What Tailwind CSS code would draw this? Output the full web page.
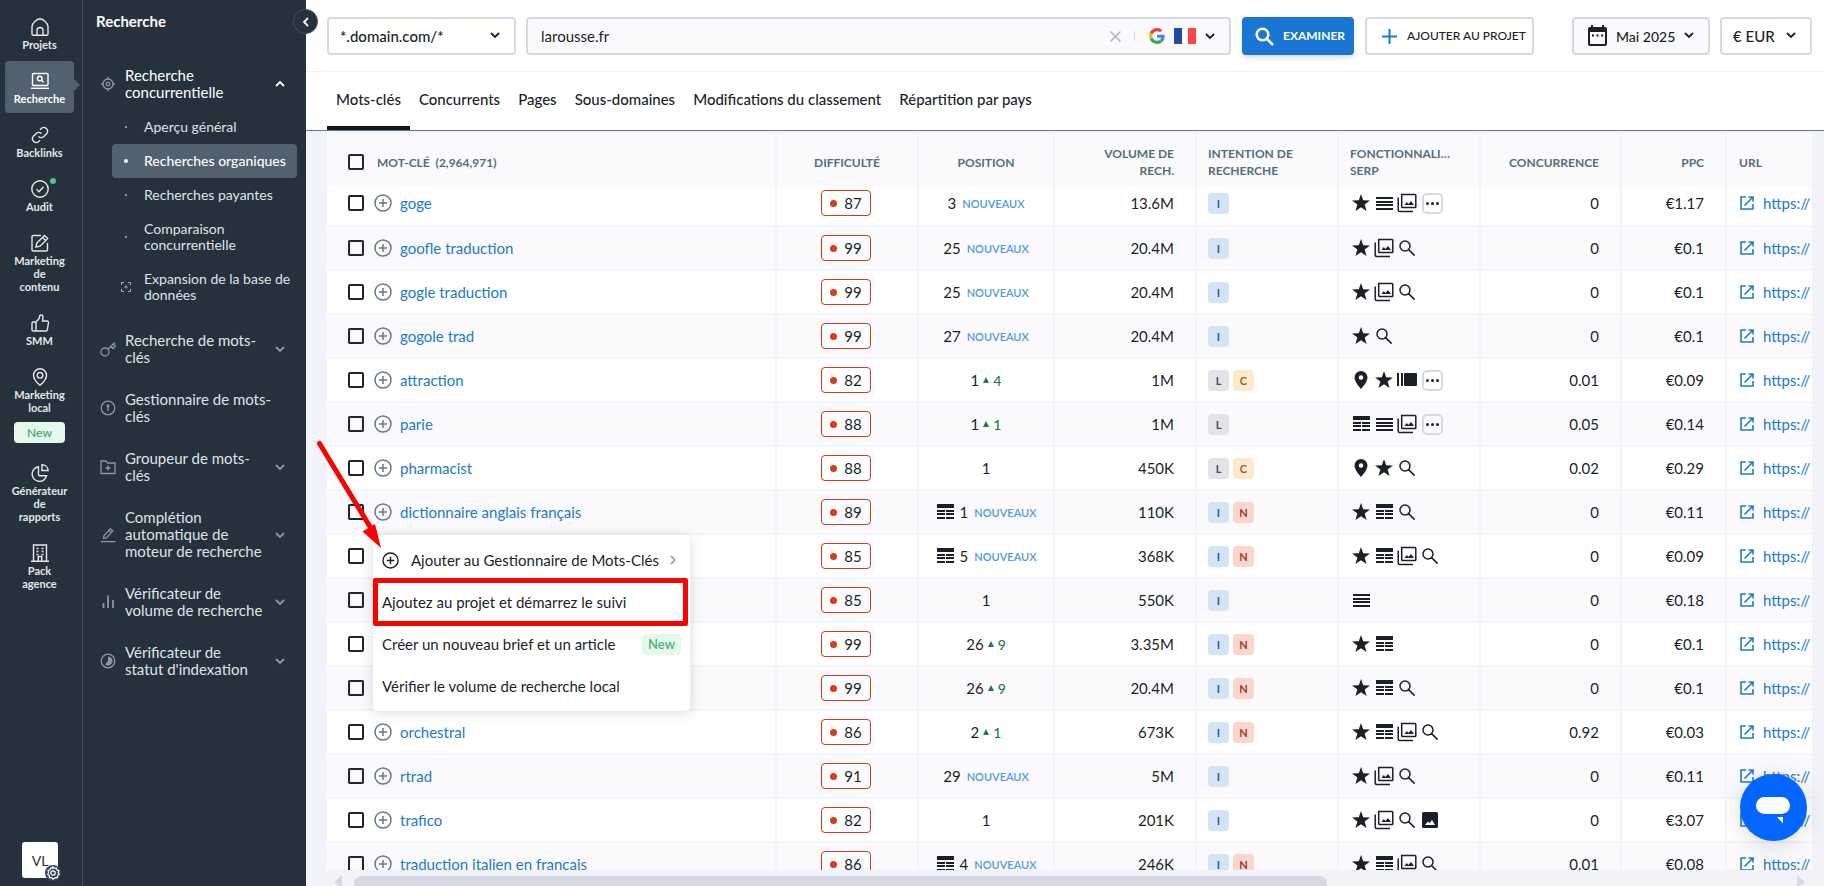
<!DOCTYPE html>
<html lang="fr">
<head>
    <meta charset="utf-8">
    <title>Recherches organiques</title>
    <script src="https://cdn.jsdelivr.net/npm/@tailwindcss/browser@4"></script>
</head>
<body class="h-screen overflow-hidden flex bg-[#f2f3f8] text-[#1b1f2a] text-[15px] font-['Lato','Open_Sans',sans-serif]">

    <!-- shared icons -->
    <svg class="hidden">
        <symbol id="chevron" viewBox="0 0 10 10"><path d="M1 3l4 4 4-4" fill="none" stroke="currentColor" stroke-width="1.8"/></symbol>
        <symbol id="plus-circle" viewBox="0 0 18 18"><g fill="none" stroke="currentColor" stroke-width="1.5"><circle cx="9" cy="9" r="8"/><path d="M9 5v8M5 9h8"/></g></symbol>
        <symbol id="star" viewBox="0 0 18 18"><path fill="currentColor" d="M9 0l2.2 6.3 6.8.2-5.4 4.1 2 6.5L9 13.3l-5.6 3.8 2-6.5L0 6.500l6.800-.2z"/></symbol>
        <symbol id="lines" viewBox="0 0 18 18"><path fill="currentColor" d="M1 3h17v2H1zM1 7h17v2H1zM1 10h17v2H1zM1 14h17v2H1z"/></symbol>
        <symbol id="grid" viewBox="0 0 18 18"><path fill="currentColor" d="M1 1h17v4H1zM1 7h8v2H1zM10 7h8v2h-8zM1 10h8v2H1zM10 10h8v2h-8zM1 14h8v2H1zM10 14h8v2h-8z"/></symbol>
        <symbol id="gallery" viewBox="0 0 20 20"><path fill="none" stroke="currentColor" stroke-width="1.500" d="M5 1.500h13a.8.8 0 0 1 .8.800v11.500a.8.8 0 0 1-.8.800H5.500a.8.8 0 0 1-.8-.800V1.500zM1.200 4.500V17a1.500 1.500 0 0 0 1.500 1.500H16"/><path fill="currentColor" d="M7.500 12l2.300-3 1.700 2 2.500-3 3 4z"/></symbol>
        <symbol id="search" viewBox="0 0 18 18"><path fill="none" stroke="currentColor" stroke-width="1.500" d="M12 7A5 5 0 1 1 2 7a5 5 0 0 1 10 0zM10.600 10.600l6 6"/></symbol>
        <symbol id="pin" viewBox="0 0 18 18"><path fill="currentColor" fill-rule="evenodd" d="M9 0a6.500 6.500 0 0 0-6.500 6.500C2.500 11.200 9 18 9 18s6.500-6.800 6.500-11.500A6.500 6.500 0 0 0 9 0zm0 4.200a2.300 2.300 0 1 1 0 4.600 2.300 2.300 0 0 1 0-4.600z"/></symbol>
        <symbol id="carousel" viewBox="0 0 20 18"><path fill="currentColor" d="M0 2h2v13H0zM4 2h2v13H4zM8 2h11a1 1 0 0 1 1 1v11a1 1 0 0 1-1 1H8a1 1 0 0 1-1-1V3a1 1 0 0 1 1-1z"/></symbol>
        <symbol id="image" viewBox="0 0 18 18"><path fill="currentColor" fill-rule="evenodd" d="M2.500 1h13A1.500 1.500 0 0 1 17 2.500v13a1.500 1.500 0 0 1-1.500 1.500h-13A1.500 1.500 0 0 1 1 15.500v-13A1.500 1.500 0 0 1 2.500 1zM4 14h10l-3-5-2.500 3.200L7 10.500z"/></symbol>
        <symbol id="external" viewBox="0 0 14 14"><path fill="none" stroke="currentColor" stroke-width="1.600" d="M6 1H1v12h12V8M8.500 1H13v4.500M13 1L4.500 9.500"/></symbol>
    </svg>

    <!-- main rail -->
    <nav class="w-[83px] shrink-0 bg-[#25313d] border-r border-[#46515d] flex flex-col pt-[7px] px-[5px] text-[#e4e7ea]">
        <ul id="rail" class="flex flex-col gap-0.5 w-[69px] text-center text-[11px] leading-[13px] font-bold"></ul>
        <a href="#" class="relative mt-auto mb-2 ml-[17px] size-9 rounded-[3px] bg-white text-[#25313d] text-[14px] flex items-center justify-center">VL
            <svg class="absolute left-[23px] top-[23px] size-4 rounded-full bg-[#3a4562] text-white" viewBox="0 0 16 16" fill="none" stroke="currentColor" stroke-width="1.200"><path d="M8 1.800l1.300 1.500 2-.3.600 1.900 1.900.8-.5 2 .9 1.700-1.600 1.200-.2 2-2 .1L8 14.200l-1.500-1.500-2-.1-.2-2-1.600-1.200.9-1.700-.5-2 1.900-.8.600-1.900 2 .3z"/><circle cx="8" cy="8" r="2.200"/></svg>
        </a>
    </nav>

    <!-- section menu -->
    <aside class="w-[223px] shrink-0 relative z-10 bg-[#25313d] text-[#dfe3e7]">
        <h2 class="pl-[13px] pt-3 text-white font-bold text-[15px] leading-[18px]">Recherche</h2>
        <ul id="groups" class="mt-[37px] text-[15px] leading-[17px]"></ul>
        <button type="button" aria-label="Réduire le menu" class="absolute -right-3 top-[9px] size-[25px] rounded-full bg-[#25313d] border border-[#46515d] text-white flex items-center justify-center">
            <svg class="size-[10px] rotate-90"><use href="#chevron"/></svg>
        </button>
    </aside>

    <main class="relative flex-1 min-w-0 flex flex-col">
        <form class="h-[72px] shrink-0 bg-white border-b border-[#f2f2f6] flex items-start pt-[17px] pl-[21px] pr-3">
            <div class="relative w-[189px] mr-[10px]">
                <select aria-label="Portée" class="appearance-none w-full h-[38px] border-2 border-[#d6d9e5] rounded pl-[11px] font-medium text-[15px]"><option>*.domain.com/*</option></select>
                <svg class="absolute right-4 top-[13px] size-[10px] pointer-events-none"><use href="#chevron"/></svg>
            </div>
            <div class="flex-1 h-[38px] border-2 border-[#d6d9e5] rounded bg-[#fafafc] flex items-center pl-[13px] pr-[14px]">
                <input aria-label="Domaine" value="larousse.fr" class="flex-1 min-w-0 outline-none text-[15px]">
                <button type="button" aria-label="Effacer" class="text-[#b4b7bf]"><svg class="size-[11px]" viewBox="0 0 11 11" stroke="currentColor" stroke-width="1.500"><path d="M.5.5l10 10M10.500.5l-10 10"/></svg></button>
                <span class="w-px h-[10px] bg-[#d6d9e5] ml-[13px] mr-[14px]"></span>
                <button type="button" aria-label="Google France" class="flex items-center">
                    <svg class="size-4 mr-[9px]" viewBox="0 0 48 48"><path fill="#ea4335" d="M24 9.500c3.540 0 6.710 1.220 9.210 3.600l6.850-6.850C35.900 2.380 30.470 0 24 0 14.620 0 6.510 5.380 2.560 13.220l7.980 6.190C12.430 13.720 17.740 9.500 24 9.500z"/><path fill="#4285f4" d="M46.980 24.550c0-1.570-.15-3.090-.38-4.550H24v9.020h12.940c-.58 2.960-2.260 5.480-4.780 7.180l7.730 6c4.510-4.180 7.090-10.360 7.090-17.650z"/><path fill="#fbbc05" d="M10.530 28.590A14.500 14.500 0 0 1 9.770 24c0-1.600.27-3.140.76-4.590l-7.980-6.190A23.900 23.900 0 0 0 0 24c0 3.880.92 7.540 2.560 10.780z"/><path fill="#34a853" d="M24 48c6.480 0 11.930-2.130 15.890-5.810l-7.730-6c-2.150 1.450-4.920 2.300-8.160 2.300-6.260 0-11.570-4.220-13.470-9.910l-7.980 6.190C6.510 42.620 14.620 48 24 48z"/></svg>
                    <svg class="w-[22px] h-4 mr-[9px]" viewBox="0 0 22 16"><path fill="#1f4ba5" d="M0 0h8v16H0z"/><path fill="#fff" d="M8 0h7v16H8z"/><path fill="#fb4448" d="M14 0h8v16h-8z"/></svg>
                    <svg class="size-[10px]"><use href="#chevron"/></svg>
                </button>
            </div>
            <button type="button" class="ml-[11px] w-[112px] h-[38px] rounded bg-[#1a76d3] text-white font-bold text-[12px] flex items-center pl-[13px] gap-[9px] shadow-md shadow-black/10">
                <svg class="size-[19px]" viewBox="0 0 19 19" fill="none" stroke="currentColor" stroke-width="2.500"><circle cx="7.500" cy="7.500" r="5.800"/><path d="M11.500 11.500l6.500 6.500"/></svg>EXAMINER
            </button>
            <button type="button" class="ml-[11px] w-[169px] h-[38px] rounded border-2 border-[#d6d9e5] text-[12px] font-medium whitespace-nowrap flex items-center pl-[15px] gap-[10px]">
                <svg class="size-[15px] text-[#1a76d3]" viewBox="0 0 15 15" stroke="currentColor" stroke-width="2"><path d="M7.500 0v15M0 7.500h15"/></svg>AJOUTER AU PROJET
            </button>
            <div class="relative ml-[38px] w-[138px]">
                <svg class="absolute left-4 top-2 w-[19px] h-[21px] pointer-events-none" viewBox="0 0 19 21"><path fill="currentColor" fill-rule="evenodd" d="M3 0h2v2h9V0h2v2h1a2 2 0 0 1 2 2v15a2 2 0 0 1-2 2H2a2 2 0 0 1-2-2V4a2 2 0 0 1 2-2h1zM2 7v12h15V7zM4 9.500h2v2H4zm4.500 0h2v2h-2zm4.500 0h2v2h-2z"/></svg>
                <select aria-label="Mois" class="appearance-none w-full h-[38px] border-2 border-[#d6d9e5] bg-[#fafafc] rounded pl-[42px] font-medium text-[14px]"><option>Mai 2025</option></select>
                <svg class="absolute right-4 top-[13px] size-[10px] pointer-events-none"><use href="#chevron"/></svg>
            </div>
            <div class="relative ml-[10px] w-[92px]">
                <select aria-label="Devise" class="appearance-none w-full h-[38px] border-2 border-[#d6d9e5] rounded pl-[11px] font-medium text-[15px]"><option>€ EUR</option></select>
                <svg class="absolute right-4 top-[13px] size-[10px] pointer-events-none"><use href="#chevron"/></svg>
            </div>
        </form>

        <nav class="h-[59px] shrink-0 bg-white border-b border-[#6b7785] flex pl-[21px] text-[15px] font-medium leading-[55px]">
            <a href="#" class="px-[9px] border-b-4 border-[#10181f]">Mots-clés</a>
            <a href="#" class="px-[9px]">Concurrents</a>
            <a href="#" class="px-[9px]">Pages</a>
            <a href="#" class="px-[9px]">Sous-domaines</a>
            <a href="#" class="px-[9px]">Modifications du classement</a>
            <a href="#" class="px-[9px]">Répartition par pays</a>
        </nav>

        <div class="mt-0.5 ml-[21px] mr-3 flex-1 min-h-0 overflow-hidden">
            <table class="w-[calc(100%+120px)] table-fixed border-separate border-spacing-0 bg-white">
                <colgroup>
                    <col><col class="w-[142px]"><col class="w-[136px]"><col class="w-[142px]"><col class="w-[142px]"><col class="w-[142px]"><col class="w-[141px]"><col class="w-[105px]"><col class="w-[205px]">
                </colgroup>
                <thead class="text-[12px] leading-[17px] text-[#546e7a]">
                    <tr class="h-[54px] *:bg-[#fafafc] *:border-r-2 *:border-[#f3f4f8] *:font-bold *:pt-1">
                        <th class="text-left pl-[21px]"><label class="flex items-center gap-[13px]"><input type="checkbox" class="appearance-none size-4 border-2 border-[#2a2438] rounded-xs">MOT-CLÉ&nbsp; (2,964,971)</label></th>
                        <th>DIFFICULTÉ</th>
                        <th>POSITION</th>
                        <th class="text-right pr-[21px] pl-6">VOLUME DE<br>RECH.</th>
                        <th class="text-left pl-[11px]">INTENTION DE<br>RECHERCHE</th>
                        <th class="text-left pl-[11px]">FONCTIONNALI…<br>SERP</th>
                        <th class="text-right pr-[21px]">CONCURRENCE</th>
                        <th class="text-right pr-[21px]">PPC</th>
                        <th class="text-left pl-3">URL</th>
                    </tr>
                </thead>
                <tbody id="rows"></tbody>
            </table>
        </div>

        <!-- horizontal scrollbar -->
        <div class="h-4 shrink-0 overflow-hidden ml-[21px] mr-3 pl-[7px] pr-[7px] pt-[5px] flex gap-3">
            <svg class="w-2 h-[14px] shrink-0 text-[#d6d9e5]" viewBox="0 0 8 14"><path fill="currentColor" d="M8 0v14L0 7z"/></svg>
            <div class="flex-1 h-5"><div class="w-[68%] h-5 mt-px rounded-lg bg-[#d6d9e5]"></div></div>
            <svg class="w-2 h-[14px] shrink-0 text-[#d6d9e5]" viewBox="0 0 8 14"><path fill="currentColor" d="M0 0v14l8-7z"/></svg>
        </div>

        <!-- keyword context menu -->
        <div class="absolute z-20 left-[67px] top-[535px] w-[317px] py-1 bg-white rounded shadow-[0_2px_14px_rgba(0,0,0,0.14)] text-[15px] *:h-[42px] *:w-full *:flex *:items-center *:px-[9px]">
            <button type="button"><svg class="size-[17px] mr-3"><use href="#plus-circle"/></svg>Ajouter au Gestionnaire de Mots-Clés<svg class="size-[10px] ml-auto mr-[3px] -rotate-90 text-[#a5a8b2]"><use href="#chevron"/></svg></button>
            <button type="button">Ajoutez au projet et démarrez le suivi</button>
            <button type="button">Créer un nouveau brief et un article<span class="ml-auto w-[39px] h-[21px] rounded bg-[#e4f9eb] text-[#4aae7b] text-[13px] font-semibold leading-[21px] text-center">New</span></button>
            <button type="button">Vérifier le volume de recherche local</button>
        </div>
        <div class="absolute z-20 left-[67px] top-[578px] w-[315px] h-12 rounded-xs border-5 border-[#fe0000]"></div>
        <svg class="absolute z-20 left-[10px] top-[438px] w-[70px] h-[112px]" viewBox="0 0 70 112"><path d="M3.500 5.500L56 92" stroke="#fe0000" stroke-width="5" stroke-linecap="round"/><path fill="#fe0000" d="M65 110L46.500 93.500 59 86z"/></svg>

        <button type="button" aria-label="Chat" class="absolute z-20 right-[17px] bottom-[45px] size-[67px] rounded-full bg-[#0566ff] shadow-[0_4px_24px_rgba(0,0,0,0.15)]">
            <svg class="size-[67px]" viewBox="0 0 67 67" fill="#fff"><rect x="16" y="23" width="34" height="17" rx="8.500"/><path d="M37 43h6v6.500z"/></svg>
        </button>
    </main>

    <script>
        const stroke = (d) => `<svg class="size-[18px] mx-auto" viewBox="0 0 18 18" fill="none" stroke="currentColor" stroke-width="1.4">${d}</svg>`;
        const rail = [
            ['Projets', '<path d="M1 16V8.500C1 5 6 1 9 .8c3 .2 8 4.200 8 7.700V16a1.200 1.200 0 0 1-1.200 1.200H2.200A1.200 1.200 0 0 1 1 16zM6 17v-4.500C6 10.500 7 9.500 9 9.500s3 1 3 3V17"/>'],
            ['Recherche', '<rect x="1.500" y="1.500" width="15.500" height="12" rx="1"/><path d="M0 16.300h18.500"/><circle cx="8.700" cy="6.500" r="2.300"/><path d="M10.500 8.300l2 2"/>'],
            ['Backlinks', '<path d="M7.500 10.500a3.700 3.700 0 0 0 5.300 0l3-3a3.800 3.800 0 0 0-5.300-5.300L9 3.700M10.500 7.500a3.700 3.700 0 0 0-5.300 0l-3 3a3.800 3.800 0 0 0 5.300 5.300L9 14.300"/>'],
            ['Audit', '<circle cx="9" cy="9" r="8.200"/><path d="M5.500 9.300l2.500 2.400 4.500-5"/>'],
            ['Marketing<br>de<br>contenu', '<path d="M10 1.500H2.200A1.200 1.200 0 0 0 1 2.700v13A1.300 1.300 0 0 0 2.300 17H15a1.500 1.500 0 0 0 1.500-1.500V9M5 13l.8-4 7.700-7.600 3.200 3.200L9 12.200z M11.500 3.500l3 3"/>'],
            ['SMM', '<path d="M5 8v9M1 9.200A1.200 1.200 0 0 1 2.200 8H5l3.500-4V2.500A1.500 1.500 0 0 1 10 1c1.300 0 2 1 2 2.500L11.500 7H16a1.500 1.500 0 0 1 1.500 1.800l-1.200 7A1.500 1.500 0 0 1 15 17H2.200A1.200 1.200 0 0 1 1 15.800z"/>'],
            ['Marketing<br>local', '<path d="M9 .8a6.500 6.500 0 0 0-6.500 6.500C2.500 12 9 17.300 9 17.300s6.500-5.300 6.500-10A6.500 6.500 0 0 0 9 .8z"/><circle cx="9" cy="7.300" r="2.800"/>', 'New'],
            ['Générateur<br>de<br>rapports', '<path d="M7.500 2.800a7.300 7.300 0 1 0 8 9H8.500a1 1 0 0 1-1-1zM11 .8v5.700h6.200A6.300 6.300 0 0 0 11 .8z"/>'],
            ['Pack<br>agence', '<path d="M0 17.200h18M2.500 17V1h13v16M7.300 17v-4.500h3.400V17M5.500 4.500h2M10.500 4.500h2M5.500 7.500h2M10.500 7.500h2M5.500 10.500h2M10.500 10.500h2"/>'],
        ];
        document.getElementById('rail').innerHTML = rail.map(([label, d, badge], i) => `
            <li class="relative"><a href="#" class="block pt-[11px] pb-2 rounded ${i == 1 ? 'bg-[#526070] text-white' : ''}">
                ${stroke(d)}<span class="block mt-0.5">${label}</span>
                ${badge ? `<span class="block mt-2 mx-[9px] rounded bg-[#e4f9eb] text-[#43ab72] font-semibold text-[12px] leading-[21px]">${badge}</span>` : ''}
            </a>
            ${i == 1 ? '<svg class="absolute -right-[6px] top-[18px] w-[6px] h-3" viewBox="0 0 6 12"><path fill="#526070" d="M0 0l6 6-6 6z"/></svg>' : ''}
            ${i == 3 ? '<span class="absolute right-[18px] top-[9px] size-[6px] rounded-full bg-[#4fc38a]"></span>' : ''}
            </li>`).join('');

        const smallIcon = (d) => `<svg class="size-4 shrink-0 text-[#8e979f]" viewBox="0 0 16 16" fill="none" stroke="currentColor" stroke-width="1.3">${d}</svg>`;
        const groups = [
            ['Recherche<br>concurrentielle', '<circle cx="8" cy="8" r="5"/><circle cx="8" cy="8" r="1.800"/><path d="M8 1v2.500M8 12.500V15M1 8h2.500M12.500 8H15"/>', 'open'],
            ['Recherche de mots-<br>clés', '<circle cx="5" cy="11" r="4"/><path d="M8 8l7-6.500M11 5.300l2 2.200 2.500-2.300-2-2.200"/>', 'closed'],
            ['Gestionnaire de mots-<br>clés', '<circle cx="8" cy="8" r="6.800"/><path d="M8 6v5"/><circle cx="8" cy="5.800" r="1"/>', ''],
            ['Groupeur de mots-<br>clés', '<path d="M1 2h5l1.500 2H15v10.500H1zM8 6.500v5M5.500 9h5"/>', 'closed'],
            ['Complétion<br>automatique de<br>moteur de recherche', '<path d="M3.500 11.500L4 8.500l6.500-6.700 2.300 2.300-6.500 6.800zM9 3.500l2.300 2.300M1 14.700h14.500"/>', 'closed'],
            ['Vérificateur de<br>volume de recherche', '<path stroke-width="1.800" d="M3.500 14V9M8 14V1.500M13 14V6"/>', 'closed'],
            ["Vérificateur de<br>statut d'indexation", '<circle cx="8" cy="8" r="6.800"/><path fill="currentColor" stroke="none" d="M8 3.500a4.500 4.500 0 1 1-3 7.800L8 8z"/>', 'closed'],
        ];
        const subs = ['Aperçu général', 'Recherches organiques', 'Recherches payantes', 'Comparaison<br>concurrentielle', 'Expansion de la base de<br>données'];
        const subList = `<ul class="mt-[9px] ml-[29px] mr-[9px] text-[14px] leading-4">` + subs.map((s, i) => `
            <li><a href="#" class="flex items-center rounded py-[9px] ${i == 1 ? 'bg-[#526070] text-white font-medium' : ''}">
                <span class="w-8 shrink-0 flex justify-center pr-1">${i == 4
                    ? '<svg class="size-[10px] text-[#a9b0b7]" viewBox="0 0 10 10" fill="none" stroke="currentColor"><path d="M.5 3V.5H3M7 .5h2.500V3M9.500 7v2.500H7M3 9.500H.5V7"/><circle cx="5" cy="5" r="1"/></svg>'
                    : i == 1 ? '<i class="size-1 rounded-full bg-white"></i>' : '<i class="size-0.5 bg-[#8e979f]"></i>'}</span>
                <span class="whitespace-nowrap">${s}</span></a></li>`).join('') + '</ul>';
        document.getElementById('groups').innerHTML = groups.map(([label, d, state]) => `
            <li class="${state == 'open' ? 'pb-5' : 'pb-[25px]'}">
                <button type="button" class="w-full text-left flex items-center pl-[17px] pr-[21px] ${state == 'open' ? 'text-white' : ''}">
                    ${smallIcon(d)}<span class="ml-[9px] flex-1 whitespace-nowrap">${label}</span>
                    ${state ? `<svg class="size-[10px] ${state == 'open' ? 'rotate-180' : 'text-[#8e979f]'}"><use href="#chevron"/></svg>` : ''}
                </button>
                ${state == 'open' ? subList : ''}
            </li>`).join('');

        // keyword, difficulty, position, change ("n" = new), volume, intents, serp icons, competition, cpc, snippet icon
        const rows = [
            ['goge', 87, 3, 'n', '13.6M', 'I', 'star lines gallery more', '0', '1.17'],
            ['goofle traduction', 99, 25, 'n', '20.4M', 'I', 'star gallery search', '0', '0.1'],
            ['gogle traduction', 99, 25, 'n', '20.4M', 'I', 'star gallery search', '0', '0.1'],
            ['gogole trad', 99, 27, 'n', '20.4M', 'I', 'star search', '0', '0.1'],
            ['attraction', 82, 1, 4, '1M', 'LC', 'pin star carousel more', '0.01', '0.09'],
            ['parie', 88, 1, 1, '1M', 'L', 'grid lines gallery more', '0.05', '0.14'],
            ['pharmacist', 88, 1, 0, '450K', 'LC', 'pin star search', '0.02', '0.29'],
            ['dictionnaire anglais français', 89, 1, 'n', '110K', 'IN', 'star grid search', '0', '0.11', 1],
            ['', 85, 5, 'n', '368K', 'IN', 'star grid gallery search', '0', '0.09', 1],
            ['', 85, 1, 0, '550K', 'I', 'lines', '0', '0.18'],
            ['', 99, 26, 9, '3.35M', 'IN', 'star grid', '0', '0.1'],
            ['', 99, 26, 9, '20.4M', 'IN', 'star grid search', '0', '0.1'],
            ['orchestral', 86, 2, 1, '673K', 'IN', 'star grid gallery search', '0.92', '0.03'],
            ['rtrad', 91, 29, 'n', '5M', 'I', 'star gallery search', '0', '0.11'],
            ['trafico', 82, 1, 0, '201K', 'I', 'star gallery search image', '0', '3.07'],
            ['traduction italien en francais', 86, 4, 'n', '246K', 'IN', 'star grid gallery search', '0.01', '0.08', 1],
        ];
        const intentColors = {
            I: 'bg-[#d3e4f6] text-[#1d5fae]',
            L: 'bg-[#e4e3ea] text-[#4d4d55]',
            C: 'bg-[#fdeacc] text-[#a2601f]',
            N: 'bg-[#fbd6cd] text-[#a03c2c]',
        };
        const serpIcon = (name) => name == 'more'
            ? '<button type="button" aria-label="Plus" class="ml-1 size-[21px] rounded-[5px] border-2 border-[#d6d9e5] flex items-center justify-center gap-0.5"><i class="size-[3px] rounded-full bg-current"></i><i class="size-[3px] rounded-full bg-current"></i><i class="size-[3px] rounded-full bg-current"></i></button>'
            : `<span class="w-[23px] flex justify-center"><svg class="${name == 'gallery' || name == 'carousel' ? 'size-5' : 'size-[18px]'}"><use href="#${name}"/></svg></span>`;
        const change = (c) => c == 'n' ? '<span class="ml-[6px] pt-0.5 text-[11px] font-semibold text-[#5299e0]">NOUVEAUX</span>'
            : c ? `<svg class="ml-1 mr-1 size-[6px]" viewBox="0 0 6 6"><path fill="#1d7a4e" d="M3 0l3 6H0z"/></svg><span class="text-[14px] font-medium text-[#1d7a4e]">${c}</span>` : '';
        document.getElementById('rows').innerHTML = rows.map(([kw, diff, pos, ch, vol, intents, serp, comp, cpc, snippet]) => `
            <tr class="h-11 first:h-10 first:*:pb-[6px] even:bg-[#fafafc] *:border-r-2 *:border-b-2 *:border-[#f3f4f8]">
                <td class="pl-[21px]"><div class="flex items-center">
                    <input type="checkbox" aria-label="Sélectionner ${kw}" class="appearance-none size-4 border-2 border-[#20242c] rounded-xs">
                    ${kw ? `<button type="button" aria-label="Ajouter" class="ml-[10px] text-[#6b7785]"><svg class="size-[18px]"><use href="#plus-circle"/></svg></button>
                    <a href="#" class="ml-2 text-[#2279d0]">${kw}</a>` : ''}
                </div></td>
                <td class="pr-0.5"><div class="mx-auto w-[50px] h-[26px] rounded border border-[#d33d18] flex items-center justify-center gap-[7px]"><i class="size-[7px] rounded-full bg-[#d33d18]"></i>${diff}</div></td>
                <td><div class="flex items-center justify-center">${snippet ? '<svg class="size-[18px] mr-[6px]"><use href="#grid"/></svg>' : ''}${pos}${change(ch)}</div></td>
                <td class="text-right pr-[21px]">${vol}</td>
                <td class="pl-[11px]"><div class="flex gap-1">${[...intents].map(k => `<span class="size-[21px] rounded text-[11px] font-bold leading-[22px] text-center ${intentColors[k]}">${k}</span>`).join('')}</div></td>
                <td class="pl-[10px]"><div class="flex items-center">${serp.split(' ').map(serpIcon).join('')}</div></td>
                <td class="text-right pr-[21px]">${comp}</td>
                <td class="text-right pr-[21px]">€${cpc}</td>
                <td class="pl-[13px]"><a href="#" class="flex items-center gap-[9px] text-[#2279d0]"><svg class="size-[14px]"><use href="#external"/></svg>https://</a></td>
            </tr>`).join('');
    </script>
</body>
</html>
